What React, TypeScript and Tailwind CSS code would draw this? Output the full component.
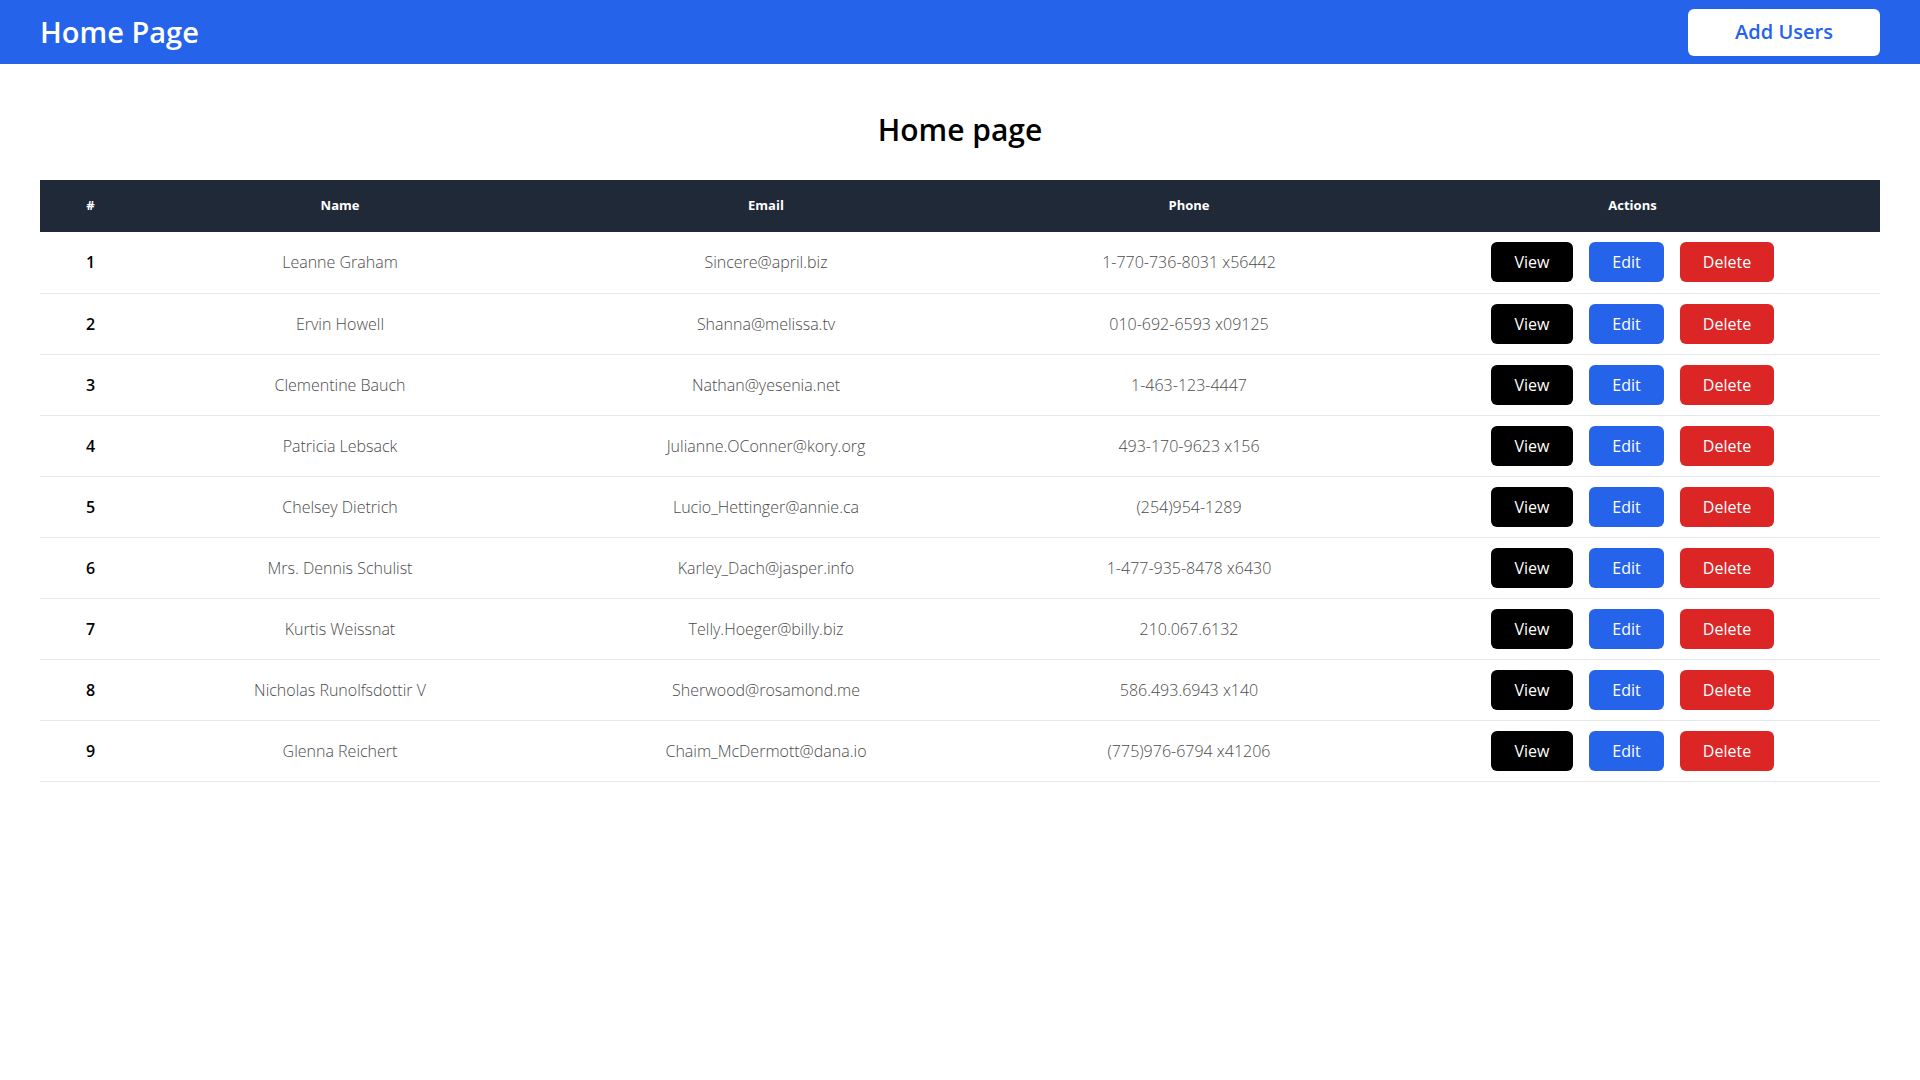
import React from "react";

type User = {
  id: number;
  name: string;
  email: string;
  phone: string;
};

const users: User[] = [
  { id: 1, name: "Leanne Graham", email: "Sincere@april.biz", phone: "1-770-736-8031 x56442" },
  { id: 2, name: "Ervin Howell", email: "Shanna@melissa.tv", phone: "010-692-6593 x09125" },
  { id: 3, name: "Clementine Bauch", email: "Nathan@yesenia.net", phone: "1-463-123-4447" },
  { id: 4, name: "Patricia Lebsack", email: "Julianne.OConner@kory.org", phone: "493-170-9623 x156" },
  { id: 5, name: "Chelsey Dietrich", email: "Lucio_Hettinger@annie.ca", phone: "(254)954-1289" },
  { id: 6, name: "Mrs. Dennis Schulist", email: "Karley_Dach@jasper.info", phone: "1-477-935-8478 x6430" },
  { id: 7, name: "Kurtis Weissnat", email: "Telly.Hoeger@billy.biz", phone: "210.067.6132" },
  { id: 8, name: "Nicholas Runolfsdottir V", email: "Sherwood@rosamond.me", phone: "586.493.6943 x140" },
  { id: 9, name: "Glenna Reichert", email: "Chaim_McDermott@dana.io", phone: "(775)976-6794 x41206" },
];

// --- Navbar ---
function Navbar() {
  return (
    <nav className="flex h-16 items-center justify-between bg-[#2563eb] px-10">
      <h1 className="text-[29px] font-semibold text-white">Home Page</h1>
      <button className="h-[47px] w-48 rounded-md bg-white text-[20px] font-semibold text-[#2563eb]">
        Add Users
      </button>
    </nav>
  );
}

export default function App() {
  return (
    <div
      className="min-h-screen bg-white"
      style={{ fontFamily: '"Segoe UI", "Open Sans", "Noto Sans", sans-serif' }}
    >
      <Navbar />

      <main className="px-10 pt-12">
        <h2 className="mb-8 text-center text-[30px] leading-9 font-semibold text-black">Home page</h2>

        <table className="w-full table-fixed border-collapse">
          <thead>
            <tr className="h-[52px] bg-[#1f2937] text-[13px] font-bold text-white">
              <th className="w-[101px]">#</th>
              <th className="w-[398px]">Name</th>
              <th className="w-[454px]">Email</th>
              <th className="w-[392px]">Phone</th>
              <th>Actions</th>
            </tr>
          </thead>
          <tbody>
            {users.map((u) => (
              <tr key={u.id} className="h-[61px] border-b border-[#e5e7eb] text-center text-base">
                <td className="font-semibold text-black">{u.id}</td>
                <td className="font-light text-[#4b4b4b]">{u.name}</td>
                <td className="font-light text-[#4b4b4b]">{u.email}</td>
                <td className="font-light text-[#4b4b4b]">{u.phone}</td>
                <td>
                  <div className="flex items-center justify-center gap-4">
                    <button className="h-10 w-[82px] rounded-md bg-black text-white">View</button>
                    <button className="h-10 w-[75px] rounded-md bg-[#2563eb] text-white">Edit</button>
                    <button className="h-10 w-[94px] rounded-md bg-[#dc2626] text-white">Delete</button>
                  </div>
                </td>
              </tr>
            ))}
          </tbody>
        </table>
      </main>
    </div>
  );
}
